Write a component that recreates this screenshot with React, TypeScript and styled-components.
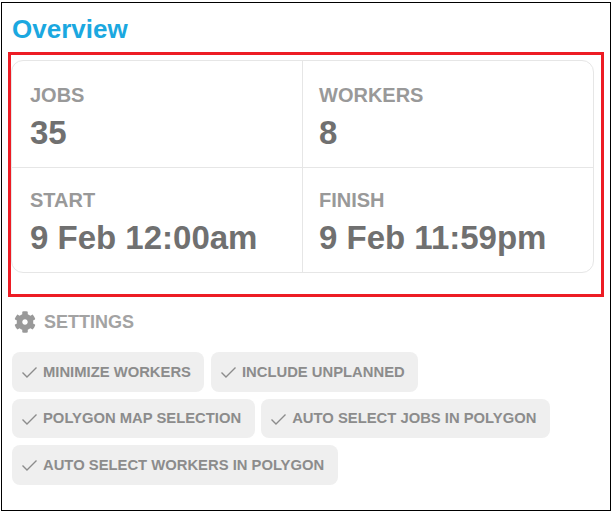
import styled, { createGlobalStyle } from "styled-components"

const GlobalStyle = createGlobalStyle`
  html, body {
    margin: 0;
    padding: 0;
    background: #fff;
  }
  body {
    font-family: "Liberation Sans", Arial, sans-serif;
  }
`

const Frame = styled.div`
  box-sizing: border-box;
  width: 610px;
  height: 509px;
  margin: 2px 0 0 1px;
  border: 1px solid #000;
  padding: 11px 6px 0 6px;
`

const Title = styled.h1`
  margin: 0 0 0 4px;
  height: 28px;
  font-size: 26px;
  line-height: 30px;
  font-weight: 700;
  color: #1ba8e0;
`

const Highlight = styled.div`
  box-sizing: border-box;
  width: 596px;
  height: 245px;
  margin-top: 10px;
  border: 3px solid #ed1c24;
  padding: 5px 7px 0 0;
`

const Card = styled.div`
  box-sizing: border-box;
  height: 213px;
  margin-left: 0;
  border: 1px solid #e6e6e6;
  border-radius: 12px;
  display: grid;
  grid-template-columns: 290px 1fr;
  grid-template-rows: 106px 1fr;
`

const Cell = styled.div<{ $right?: boolean; $bottom?: boolean }>`
  padding: ${(p) => (p.$bottom ? "20px" : "22px")} 0 0 ${(p) => (p.$right ? "16px" : "18px")};
  border-left: ${(p) => (p.$right ? "1px solid #e6e6e6" : "none")};
  border-top: ${(p) => (p.$bottom ? "1px solid #e6e6e6" : "none")};
`

const Label = styled.div`
  font-size: 20px;
  line-height: 24px;
  font-weight: 700;
  color: #999;
`

const Value = styled.div`
  margin-top: 7px;
  font-size: 33px;
  line-height: 38px;
  font-weight: 700;
  color: #707070;
`

const SettingsHeader = styled.div`
  display: flex;
  align-items: center;
  gap: 8px;
  margin: 13px 0 0 6px;
  height: 24px;
`

const SettingsLabel = styled.span`
  font-size: 18px;
  font-weight: 700;
  color: #a3a3a3;
`

const Chips = styled.div`
  display: flex;
  flex-wrap: wrap;
  gap: 7px 6.5px;
  margin: 18px 0 0 4px;
  width: 570px;
`

const Chip = styled.div`
  box-sizing: border-box;
  height: 39.5px;
  display: flex;
  align-items: center;
  gap: 5px;
  padding: 0 13.5px 0 9px;
  border-radius: 8px;
  background: #efefef;
  font-size: 14.8px;
  font-weight: 700;
  color: #8c8c8c;
`

const CheckIcon = () => (
  <svg width="17" height="17" viewBox="0 0 17 17" fill="none">
    <path d="M1.5 9.5 L6 14 L15.5 4.5" stroke="#8c8c8c" strokeWidth="1.4" />
  </svg>
)

const GearIcon = () => (
  <svg width="22" height="22" viewBox="0 0 512 512" fill="#999">
    <path d="M487.4 315.7l-42.6-24.6c4.3-23.2 4.3-47 0-70.2l42.6-24.6c4.9-2.8 7.1-8.6 5.5-14-11.1-35.6-30-67.8-54.7-94.6-3.8-4.1-10-5.1-14.8-2.3L380.8 110c-17.9-15.4-38.5-27.3-60.8-35.1V25.8c0-5.6-3.9-10.5-9.4-11.7-36.7-8.2-74.3-7.8-109.2 0-5.5 1.2-9.4 6.1-9.4 11.7V75c-22.2 7.9-42.8 19.8-60.8 35.1L88.7 85.5c-4.9-2.8-11-1.9-14.8 2.3-24.7 26.7-43.6 58.9-54.7 94.6-1.7 5.4.6 11.2 5.5 14L67.3 221c-4.3 23.2-4.3 47 0 70.2l-42.6 24.6c-4.9 2.8-7.1 8.6-5.5 14 11.1 35.6 30 67.8 54.7 94.6 3.8 4.1 10 5.1 14.8 2.3l42.6-24.6c17.9 15.4 38.5 27.3 60.8 35.1v49.2c0 5.6 3.9 10.5 9.4 11.7 36.7 8.2 74.3 7.8 109.2 0 5.5-1.2 9.4-6.1 9.4-11.7v-49.2c22.2-7.9 42.8-19.8 60.8-35.1l42.6 24.6c4.9 2.8 11 1.9 14.8-2.3 24.7-26.7 43.6-58.9 54.7-94.6 1.5-5.5-.7-11.3-5.6-14.1zM256 320c-35.3 0-64-28.7-64-64s28.7-64 64-64 64 28.7 64 64-28.7 64-64 64z" />
  </svg>
)

const stats = [
  { label: "JOBS", value: "35" },
  { label: "WORKERS", value: "8" },
  { label: "START", value: "9 Feb 12:00am" },
  { label: "FINISH", value: "9 Feb 11:59pm" }
]

const settings = [
  "MINIMIZE WORKERS",
  "INCLUDE UNPLANNED",
  "POLYGON MAP SELECTION",
  "AUTO SELECT JOBS IN POLYGON",
  "AUTO SELECT WORKERS IN POLYGON"
]

export default function App() {
  return (
    <>
      <GlobalStyle />
      <Frame>
        <Title>Overview</Title>
        <Highlight>
          <Card>
            {stats.map((s, i) => (
              <Cell key={s.label} $right={i % 2 === 1} $bottom={i > 1}>
                <Label>{s.label}</Label>
                <Value>{s.value}</Value>
              </Cell>
            ))}
          </Card>
        </Highlight>
        <SettingsHeader>
          <GearIcon />
          <SettingsLabel>SETTINGS</SettingsLabel>
        </SettingsHeader>
        <Chips>
          {settings.map((s) => (
            <Chip key={s}>
              <CheckIcon />
              {s}
            </Chip>
          ))}
        </Chips>
      </Frame>
    </>
  )
}
